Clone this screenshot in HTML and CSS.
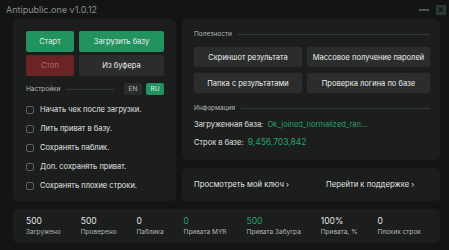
FILE: index.html
```html
<!DOCTYPE html>
<html lang="ru">
<head>
    <meta charset="UTF-8">
    <title>Antipublic.one</title>
    <link rel="stylesheet" href="styles.css">
</head>
<body>
    <div class="titlebar">
        <span class="title">Antipublic.one v1.0.12</span>
        <div class="win-controls">
            <span class="minimize"></span>
            <span class="close">×</span>
        </div>
    </div>

    <div class="main">
        <div class="panel left">
            <div class="actions">
                <button class="btn green small">Старт</button>
                <button class="btn green">Загрузить базу</button>
                <button class="btn red small">Стоп</button>
                <button class="btn gray">Из буфера</button>
            </div>

            <div class="settings-head">
                <span class="label">Настройки</span>
                <span class="line"></span>
                <span class="lang">EN</span>
                <span class="lang active">RU</span>
            </div>

            <ul class="options">
                <li><span class="check"></span>Начать чек после загрузки.</li>
                <li><span class="check"></span>Лить приват в базу.</li>
                <li><span class="check"></span>Сохранять паблик.</li>
                <li><span class="check"></span>Доп. сохранять приват.</li>
                <li><span class="check"></span>Сохранять плохие строки.</li>
            </ul>
        </div>

        <div class="right-col">
            <div class="panel tools">
                <div class="section-head">
                    <span class="label">Полезности</span>
                    <span class="line"></span>
                </div>
                <div class="tool-grid">
                    <button class="btn gray">Скриншот результата</button>
                    <button class="btn gray">Массовое получение паролей</button>
                    <button class="btn gray">Папка с результатами</button>
                    <button class="btn gray">Проверка логина по базе</button>
                </div>

                <div class="section-head info-head">
                    <span class="label">Информация</span>
                    <span class="line"></span>
                </div>
                <p class="info">Загруженная база: <span class="accent">Ok_joined_normalized_ran...</span></p>
                <p class="info">Строк в базе: <span class="accent num">9,456,703,842</span></p>
            </div>

            <div class="panel links">
                <span class="link">Просмотреть мой ключ ›</span>
                <span class="link">Перейти к поддержке ›</span>
            </div>
        </div>

        <div class="panel stats">
            <div class="stat"><b>500</b><span>Загружено</span></div>
            <div class="stat"><b>500</b><span>Проверено</span></div>
            <div class="stat"><b>0</b><span>Паблика</span></div>
            <div class="stat"><b class="accent">0</b><span>Привата MYR</span></div>
            <div class="stat"><b class="accent">500</b><span>Привата Забугра</span></div>
            <div class="stat"><b>100%</b><span>Привата, %</span></div>
            <div class="stat"><b>0</b><span>Плохих строк</span></div>
        </div>
    </div>
</body>
</html>
```

FILE: styles.css
```css
/* base */
html, body {
    margin: 0;
    width: 449px;
    height: 250px;
    background: #131514;
    font-family: Inter, "Noto Sans", sans-serif;
    color: #e2e4e3;
    overflow: hidden;
}

/* title bar */
.titlebar {
    height: 19px;
    display: flex;
    align-items: center;
    justify-content: space-between;
    padding: 0 3px 0 6px;
}

.title {
    font-size: 9px;
    color: #8b8e8d;
}

.win-controls {
    display: flex;
    align-items: center;
    gap: 7px;
}

.minimize {
    width: 10px;
    height: 2px;
    background: #4d5350;
}

.close {
    width: 10px;
    height: 10px;
    background: #2b3a33;
    color: #0f1211;
    font-size: 10px;
    line-height: 9px;
    text-align: center;
    font-weight: bold;
}

/* layout */
.main {
    display: grid;
    grid-template-columns: 163px 258px;
    column-gap: 6px;
    row-gap: 8px;
    padding: 0 8px 0 13px;
}

.panel {
    background: #1b1e1d;
    border-radius: 5px;
}

.left {
    height: 182px;
    box-sizing: border-box;
    padding: 12px 12px 0 13px;
}

.actions {
    display: grid;
    grid-template-columns: 48px 85px;
    gap: 3px 5px;
}

.btn {
    border: none;
    border-radius: 2px;
    font-family: inherit;
    font-size: 7.5px;
    color: #eef0ef;
    padding: 0;
    height: 21px;
}

.green { background: #22935f; }
.red { background: #6a2424; color: #b46b6b; }
.gray { background: #2a2d2c; }

.settings-head {
    display: flex;
    align-items: center;
    margin-top: 7px;
    height: 12px;
}

.label {
    font-size: 6.5px;
    color: #b5b8b7;
}

.line {
    flex: 1;
    height: 1px;
    background: #343837;
    margin: 0 6px;
}

.lang {
    font-size: 6.5px;
    width: 18px;
    height: 12px;
    line-height: 12px;
    text-align: center;
    background: #2a2d2c;
    color: #b5b8b7;
    border-radius: 2px;
    margin-left: 4px;
}

.lang.active {
    background: #22935f;
    color: #eef0ef;
}

.options {
    list-style: none;
    margin: 5px 0 0;
    padding: 0;
}

.options li {
    display: flex;
    align-items: center;
    height: 19px;
    font-size: 7.5px;
}

.check {
    width: 6px;
    height: 6px;
    border: 1px solid #5d6261;
    border-radius: 2px;
    margin-right: 6px;
}

/* right side */
.right-col {
    display: flex;
    flex-direction: column;
    gap: 8px;
}

.tools {
    height: 141px;
    box-sizing: border-box;
    padding: 10px 10px 0 12px;
}

.section-head {
    display: flex;
    align-items: center;
    height: 10px;
}

.section-head .line {
    margin-right: 0;
}

.tool-grid {
    display: grid;
    grid-template-columns: 108px 123px;
    gap: 6px 5px;
    margin-top: 8px;
}

.tool-grid .btn {
    height: 20px;
}

.info-head {
    margin-top: 10px;
}

.info {
    margin: 7px 0 0;
    font-size: 7.5px;
    line-height: 10px;
}

.accent {
    color: #27a36a;
    margin-left: 2px;
}

.num {
    font-size: 8.5px;
}

.links {
    height: 33px;
    display: flex;
    align-items: center;
    padding-left: 12px;
    font-size: 7.7px;
}

.link:first-child {
    width: 132px;
}

/* stats */
.stats {
    grid-column: 1 / 3;
    height: 34px;
    display: flex;
    align-items: center;
    gap: 20px;
    padding-left: 13px;
}

.stat {
    display: flex;
    flex-direction: column;
    gap: 2px;
}

.stat b {
    font-weight: normal;
    font-size: 8.5px;
}

.stat b.accent {
    margin-left: 0;
}

.stat span {
    font-size: 6.5px;
    color: #b5b8b7;
}
```
